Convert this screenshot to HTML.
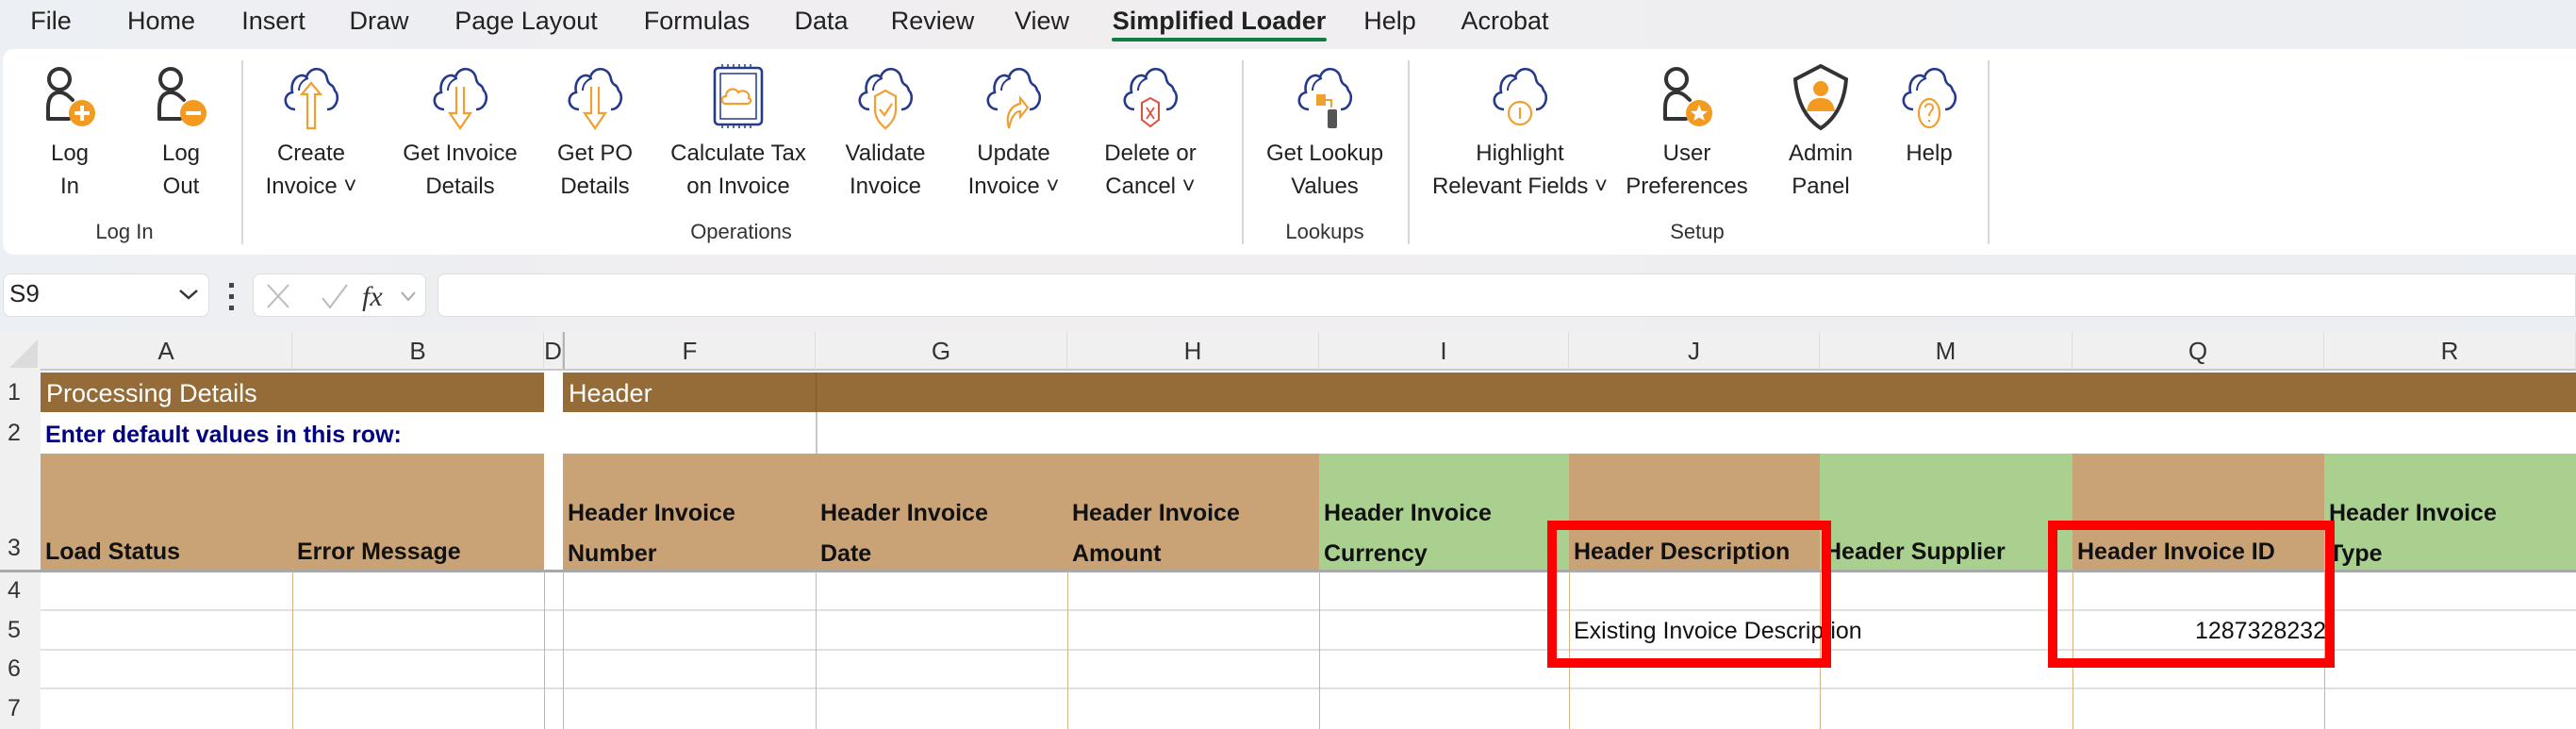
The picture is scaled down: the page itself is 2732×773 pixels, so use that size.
<!DOCTYPE html>
<html><head><meta charset="utf-8"><style>
*{margin:0;padding:0;box-sizing:border-box}
body{width:2732px;height:773px;overflow:hidden;position:relative;background:linear-gradient(90deg,#eceff3,#f1eef0 40%,#ebeef2);font-family:"Liberation Sans",sans-serif;color:#222}
.a{position:absolute;white-space:nowrap}
.tab{position:absolute;top:7px;font-size:27px;color:#222;transform:translateX(-50%)}
.rib{position:absolute;left:3px;top:52px;width:2729px;height:218px;background:#fff;border-radius:12px 0 0 12px}
.lbl{position:absolute;top:145px;font-size:24px;line-height:35px;text-align:center;transform:translateX(-50%);color:#222;white-space:nowrap}
.grp{position:absolute;top:233px;font-size:22px;transform:translateX(-50%);color:#333}
.sep{position:absolute;top:64px;width:2px;height:195px;background:#d8d8d8}
.ic{position:absolute;top:66px;transform:translateX(-50%)}
.ch{position:absolute;top:352px;height:41px;font-size:26px;color:#333;text-align:center;line-height:41px;background:#f0f0f0;border-right:1px solid #ddd;border-bottom:2px solid #c8c8c8}
.rn{position:absolute;left:0;width:43px;font-size:25px;color:#333;padding-left:8px;background:#f0f0f0}
.hd{position:absolute;top:481px;height:125px;font-weight:bold;font-size:25px;line-height:43px;padding:7px 0 0 5px;color:#111}
.two{padding-top:42px}
.one{line-height:200px;padding-top:4px}
.vl{position:absolute;top:606px;height:167px;width:1px;background:#d2b48c}
.hl{position:absolute;left:43px;width:2689px;height:2px;background:#e0e0e0}
</style></head><body>
<div class="tab" style="left:54px">File</div>
<div class="tab" style="left:171px">Home</div>
<div class="tab" style="left:290px">Insert</div>
<div class="tab" style="left:402px">Draw</div>
<div class="tab" style="left:558px">Page Layout</div>
<div class="tab" style="left:739px">Formulas</div>
<div class="tab" style="left:871px">Data</div>
<div class="tab" style="left:989px">Review</div>
<div class="tab" style="left:1105px">View</div>
<div class="tab" style="left:1293px;font-weight:bold">Simplified Loader</div>
<div class="a" style="left:1179px;top:40px;width:228px;height:4px;background:#107c41;border-radius:2px"></div>
<div class="tab" style="left:1474px">Help</div>
<div class="tab" style="left:1596px">Acrobat</div>

<div class="rib"></div>
<svg width="0" height="0" style="position:absolute"><defs>
<g id="cl"><path d="M18 50 C6 50 4 34 15 32 C12 18 24 10 30 16 C33 4 50 4 52 18 C54 26 58 22 60 30 C66 36 62 50 52 50" fill="none" stroke="#263a8c" stroke-width="2.6"/><path d="M22 30 C22 22 28 18 32 17" fill="none" stroke="#263a8c" stroke-width="2"/></g>
<g id="usr"><circle cx="24" cy="18" r="11" fill="none" stroke="#333" stroke-width="4"/><path d="M12 60 L12 48 C12 36 18 32 24 32 C30 32 34 36 38 40 M12 60 L34 60" fill="none" stroke="#333" stroke-width="4" stroke-linecap="round"/></g>
</defs></svg>
<svg class="ic" style="left:74px" width="70" height="72" viewBox="0 0 70 72"><use href="#usr"/><circle cx="48" cy="54" r="14" fill="#f39a21"/><path d="M48 46v16M40 54h16" stroke="#fff" stroke-width="4"/></svg>
<svg class="ic" style="left:192px" width="70" height="72" viewBox="0 0 70 72"><use href="#usr"/><circle cx="48" cy="54" r="14" fill="#f39a21"/><path d="M40 54h16" stroke="#fff" stroke-width="4"/></svg>
<svg class="ic" style="left:330px" width="70" height="72" viewBox="0 0 70 72"><use href="#cl"/><path d="M35 22 L25 34 H31 V70 H39 V34 H45 Z" fill="none" stroke="#f0a030" stroke-width="2.2"/></svg>
<svg class="ic" style="left:488px" width="70" height="72" viewBox="0 0 70 72"><use href="#cl"/><path d="M31 26 V54 H24 L35 70 L46 54 H39 V26" fill="none" stroke="#f0a030" stroke-width="2.2"/></svg>
<svg class="ic" style="left:631px" width="70" height="72" viewBox="0 0 70 72"><use href="#cl"/><path d="M31 26 V54 H24 L35 70 L46 54 H39 V26" fill="none" stroke="#f0a030" stroke-width="2.2"/></svg>
<svg class="ic" style="left:783px" width="70" height="72" viewBox="0 0 70 72"><rect x="10" y="6" width="50" height="60" rx="4" fill="none" stroke="#263a8c" stroke-width="2.6"/><rect x="16" y="12" width="38" height="48" fill="none" stroke="#263a8c" stroke-width="1.5"/><path d="M22 44 C16 44 16 36 22 36 C22 28 32 26 35 32 C40 28 48 32 46 38 C50 40 48 44 44 44 Z" fill="none" stroke="#f0a030" stroke-width="2.2"/><path d="M18 2v4M24 2v4M30 2v4M36 2v4M42 2v4M48 2v4M18 66v4M24 66v4M30 66v4M36 66v4M42 66v4M48 66v4" stroke="#263a8c" stroke-width="1.5"/></svg>
<svg class="ic" style="left:939px" width="70" height="72" viewBox="0 0 70 72"><use href="#cl"/><path d="M35 30 L46 36 V50 C46 60 40 66 35 70 C30 66 24 60 24 50 V36 Z" fill="none" stroke="#f0a030" stroke-width="2.2"/><path d="M29 50 L34 56 L42 44" fill="none" stroke="#f0a030" stroke-width="2.2"/></svg>
<svg class="ic" style="left:1075px" width="70" height="72" viewBox="0 0 70 72"><use href="#cl"/><path d="M30 70 C26 56 32 46 42 44 V38 L50 48 L42 58 V52 C36 52 32 60 30 70 Z" fill="none" stroke="#f0a030" stroke-width="2.2"/></svg>
<svg class="ic" style="left:1220px" width="70" height="72" viewBox="0 0 70 72"><use href="#cl"/><path d="M35 38 L44 43 V61 L35 68 L26 61 V43 Z" fill="none" stroke="#e05040" stroke-width="2"/><path d="M31 48 L39 60 M39 48 L31 60" stroke="#e05040" stroke-width="1.8"/></svg>
<svg class="ic" style="left:1405px" width="70" height="72" viewBox="0 0 70 72"><use href="#cl"/><rect x="26" y="34" width="10" height="12" fill="#f0a030"/><path d="M36 40 H42 V48" fill="none" stroke="#f0a030" stroke-width="2"/><rect x="38" y="50" width="10" height="20" rx="2" fill="#555"/></svg>
<svg class="ic" style="left:1612px" width="70" height="72" viewBox="0 0 70 72"><use href="#cl"/><circle cx="35" cy="54" r="12" fill="none" stroke="#f0a030" stroke-width="2.2"/><path d="M35 48v12" stroke="#f0a030" stroke-width="2.2"/></svg>
<svg class="ic" style="left:1789px" width="70" height="72" viewBox="0 0 70 72"><use href="#usr"/><circle cx="48" cy="54" r="14" fill="#f39a21"/><path d="M48 45 L50.5 51.5 L57 52 L52 56 L54 62 L48 58.5 L42 62 L44 56 L39 52 L45.5 51.5 Z" fill="#fff"/></svg>
<svg class="ic" style="left:1931px" width="70" height="72" viewBox="0 0 70 72"><path d="M35 4 L62 18 C60 44 50 60 35 70 C20 60 10 44 8 18 Z" fill="none" stroke="#333" stroke-width="4"/><circle cx="35" cy="28" r="8" fill="#f39a21"/><path d="M20 52 C22 40 28 38 35 38 C42 38 48 40 50 52 Z" fill="#f39a21"/></svg>
<svg class="ic" style="left:2046px" width="70" height="72" viewBox="0 0 70 72"><use href="#cl"/><ellipse cx="35" cy="54" rx="11" ry="15" fill="none" stroke="#f0a030" stroke-width="2.2"/><path d="M31 48 C31 43 39 43 39 48 C39 52 35 52 35 57 M35 61v2" fill="none" stroke="#f0a030" stroke-width="2"/></svg>

<div class="lbl" style="left:74px">Log<br>In</div>
<div class="lbl" style="left:192px">Log<br>Out</div>
<div class="sep" style="left:256px"></div>
<div class="lbl" style="left:330px">Create<br>Invoice ˅</div>
<div class="lbl" style="left:488px">Get Invoice<br>Details</div>
<div class="lbl" style="left:631px">Get PO<br>Details</div>
<div class="lbl" style="left:783px">Calculate Tax<br>on Invoice</div>
<div class="lbl" style="left:939px">Validate<br>Invoice</div>
<div class="lbl" style="left:1075px">Update<br>Invoice ˅</div>
<div class="lbl" style="left:1220px">Delete or<br>Cancel ˅</div>
<div class="sep" style="left:1317px"></div>
<div class="lbl" style="left:1405px">Get Lookup<br>Values</div>
<div class="sep" style="left:1493px"></div>
<div class="lbl" style="left:1612px">Highlight<br>Relevant Fields ˅</div>
<div class="lbl" style="left:1789px">User<br>Preferences</div>
<div class="lbl" style="left:1931px">Admin<br>Panel</div>
<div class="lbl" style="left:2046px">Help</div>
<div class="sep" style="left:2108px"></div>
<div class="grp" style="left:132px">Log In</div>
<div class="grp" style="left:786px">Operations</div>
<div class="grp" style="left:1405px">Lookups</div>
<div class="grp" style="left:1800px">Setup</div>

<div class="a" style="left:3px;top:290px;width:219px;height:46px;background:#fff;border:1px solid #ddd;border-radius:8px"></div>
<div class="a" style="left:10px;top:296px;font-size:26px">S9</div>
<svg class="a" style="left:188px;top:304px" width="24" height="16"><path d="M3 4 L12 12 L21 4" fill="none" stroke="#333" stroke-width="2.5"/></svg>
<div class="a" style="left:243px;top:300px;width:5px;height:5px;background:#444"></div>
<div class="a" style="left:243px;top:312px;width:5px;height:5px;background:#444"></div>
<div class="a" style="left:243px;top:324px;width:5px;height:5px;background:#444"></div>
<div class="a" style="left:268px;top:290px;width:184px;height:46px;background:#fff;border:1px solid #ddd;border-radius:8px"></div>
<svg class="a" style="left:280px;top:298px" width="170" height="32"><path d="M4 4 L26 28 M26 4 L4 28" stroke="#bbb" stroke-width="2"/><path d="M62 18 L70 28 L88 4" fill="none" stroke="#bbb" stroke-width="2"/><text x="104" y="26" font-family="Liberation Serif" font-style="italic" font-size="30" fill="#333">fx</text><path d="M146 12 L153 20 L160 12" fill="none" stroke="#aaa" stroke-width="2"/></svg>
<div class="a" style="left:464px;top:290px;width:2268px;height:46px;background:#fff;border:1px solid #ddd;border-radius:8px 0 0 8px"></div>

<div class="a" style="left:0;top:352px;width:2732px;height:421px;background:#fff"></div>
<div class="a" style="left:0;top:352px;width:43px;height:421px;background:#f0f0f0"></div>
<svg class="a" style="left:8px;top:358px" width="34" height="34"><path d="M32 2 V32 H2 Z" fill="#dcdcdc"/></svg>
<div class="ch" style="left:43px;width:267px">A</div>
<div class="ch" style="left:310px;width:267px">B</div>
<div class="ch" style="left:577px;width:20px">D</div>
<div class="ch" style="left:597px;width:268px;border-left:2px solid #b5b5b5">F</div>
<div class="ch" style="left:865px;width:267px">G</div>
<div class="ch" style="left:1132px;width:267px">H</div>
<div class="ch" style="left:1399px;width:265px">I</div>
<div class="ch" style="left:1664px;width:266px">J</div>
<div class="ch" style="left:1930px;width:268px">M</div>
<div class="ch" style="left:2198px;width:267px">Q</div>
<div class="ch" style="left:2465px;width:267px">R</div>
<div class="rn" style="top:395px;height:42px;line-height:42px">1</div>
<div class="rn" style="top:437px;height:44px;line-height:44px">2</div>
<div class="rn" style="top:481px;height:125px;line-height:200px">3</div>
<div class="rn" style="top:606px;height:41px;line-height:41px">4</div>
<div class="rn" style="top:647px;height:42px;line-height:42px">5</div>
<div class="rn" style="top:689px;height:41px;line-height:41px">6</div>
<div class="rn" style="top:730px;height:43px;line-height:43px">7</div>
<div class="a" style="left:43px;top:395px;width:534px;height:42px;background:#956c38;color:#fff;font-size:27px;line-height:44px;padding-left:6px">Processing Details</div>
<div class="a" style="left:597px;top:395px;width:2135px;height:42px;background:#956c38;color:#fff;font-size:27px;line-height:44px;padding-left:6px">Header</div>
<div class="a" style="left:865px;top:395px;width:1px;height:42px;background:#7a5a30"></div>
<div class="a" style="left:48px;top:439px;height:44px;line-height:44px;font-size:25px;font-weight:bold;color:#000080">Enter default values in this row:</div>
<div class="a" style="left:865px;top:437px;width:2px;height:44px;background:#c8c8c8"></div>
<div class="hd one" style="left:43px;width:267px;background:#c9a375">Load Status</div>
<div class="hd one" style="left:310px;width:267px;background:#c9a375">Error Message</div>
<div class="hd two" style="left:597px;width:268px;background:#c9a375">Header Invoice<br>Number</div>
<div class="hd two" style="left:865px;width:267px;background:#c9a375">Header Invoice<br>Date</div>
<div class="hd two" style="left:1132px;width:267px;background:#c9a375">Header Invoice<br>Amount</div>
<div class="hd two" style="left:1399px;width:265px;background:#a9d08e">Header Invoice<br>Currency</div>
<div class="hd one" style="left:1664px;width:266px;background:#c9a375">Header Description</div>
<div class="hd one" style="left:1930px;width:268px;background:#a9d08e">Header Supplier</div>
<div class="hd one" style="left:2198px;width:267px;background:#c9a375">Header Invoice ID</div>
<div class="hd two" style="left:2465px;width:267px;background:#a9d08e">Header Invoice<br>Type</div>
<div class="a" style="left:0;top:604px;width:2732px;height:3px;background:#a8a8a8"></div>
<div class="hl" style="top:646px"></div>
<div class="hl" style="top:688px"></div>
<div class="hl" style="top:729px"></div>
<div class="vl" style="left:310px"></div>
<div class="vl" style="left:577px"></div>
<div class="vl" style="left:597px"></div>
<div class="vl" style="left:865px;background:#bbb"></div>
<div class="vl" style="left:1132px"></div>
<div class="vl" style="left:1399px"></div>
<div class="vl" style="left:1664px"></div>
<div class="vl" style="left:1930px"></div>
<div class="vl" style="left:2198px"></div>
<div class="vl" style="left:2465px"></div>
<div class="a" style="left:1669px;top:655px;font-size:25px;color:#111">Existing Invoice Description</div>
<div class="a" style="left:2240px;width:227px;top:655px;font-size:25px;color:#111;text-align:right">1287328232</div>
<div class="a" style="left:1641px;top:552px;width:301px;height:156px;border:10px solid #f00"></div>
<div class="a" style="left:2172px;top:552px;width:304px;height:156px;border:10px solid #f00"></div>
</body></html>
